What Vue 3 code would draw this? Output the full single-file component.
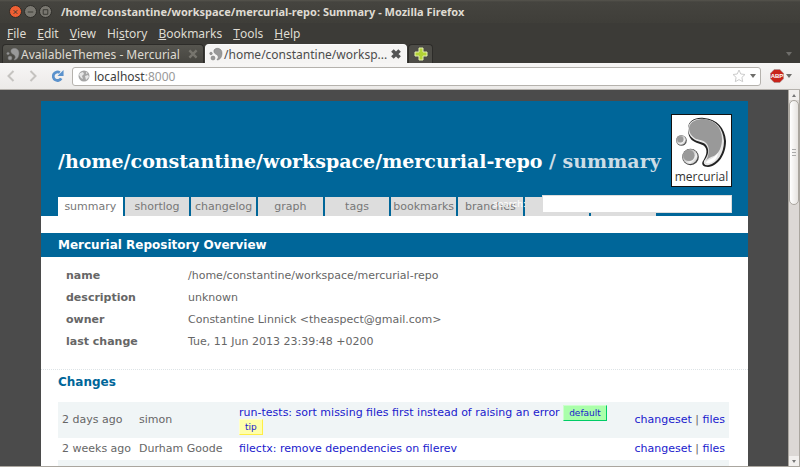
<script setup>
import { ref } from 'vue'

const menus = ['File', 'Edit', 'View', 'History', 'Bookmarks', 'Tools', 'Help']
// index of the underlined access key
const keys = { History: 2 }
const keyOf = (m) => keys[m] || 0

const tabs = ['summary', 'shortlog', 'changelog', 'graph', 'tags', 'bookmarks', 'branches', 'files', 'help']
const active = ref('summary')
const query = ref('')

const overview = [
  ['name', '/home/constantine/workspace/mercurial-repo'],
  ['description', 'unknown'],
  ['owner', 'Constantine Linnick <theaspect@gmail.com>'],
  ['last change', 'Tue, 11 Jun 2013 23:39:48 +0200'],
]

const changes = [
  { age: '2 days ago', who: 'simon', text: 'run-tests: sort missing files first instead of raising an error', tags: ['default', 'tip'] },
  { age: '2 weeks ago', who: 'Durham Goode', text: 'filectx: remove dependencies on filerev', tags: [] },
  { age: '2 days ago', who: 'simon', text: 'hgext: use same names as run for finally blocks', tags: [] },
]
</script>

<template>
  <div class="window">
    <header class="titlebar">
      <div class="winbuttons">
        <button class="win close" aria-label="Close">
          <svg viewBox="0 0 12 12"><path d="M4 4l4 4M8 4l-4 4" /></svg>
        </button>
        <button class="win" aria-label="Minimize">
          <svg viewBox="0 0 12 12"><path d="M3 6h6" /></svg>
        </button>
        <button class="win" aria-label="Maximize">
          <svg viewBox="0 0 12 12"><path d="M3.500 3.500h5v5h-5z" /></svg>
        </button>
      </div>
      <span class="wintitle">/home/constantine/workspace/mercurial-repo: Summary - Mozilla Firefox</span>
    </header>

    <nav class="menubar">
      <button v-for="m in menus" :key="m">{{ m.slice(0, keyOf(m)) }}<u>{{ m[keyOf(m)] }}</u>{{ m.slice(keyOf(m) + 1) }}</button>
    </nav>

    <div class="tabstrip">
      <div class="btab">
        <svg class="fav" viewBox="0 0 14 14"><path d="M5 3C7 0 13 1 13 6c0 4-2 7-5 7 0-1 2-2 1-4C8 7 4 7 5 3z" /><circle cx="4" cy="11" r="2" /><circle cx="2" cy="6.500" r="1.300" /></svg>
        <span class="label">AvailableThemes - Mercurial</span>
        <button class="tabclose" aria-label="Close tab"><svg viewBox="0 0 10 10"><path d="M2 2l6 6M8 2l-6 6" /></svg></button>
      </div>
      <div class="btab current">
        <svg class="fav" viewBox="0 0 14 14"><path d="M5 3C7 0 13 1 13 6c0 4-2 7-5 7 0-1 2-2 1-4C8 7 4 7 5 3z" /><circle cx="4" cy="11" r="2" /><circle cx="2" cy="6.500" r="1.300" /></svg>
        <span class="label">/home/constantine/worksp...</span>
        <button class="tabclose" aria-label="Close tab"><svg viewBox="0 0 10 10"><path d="M2 2l6 6M8 2l-6 6" /></svg></button>
      </div>
      <button class="newtab" aria-label="New tab">
        <svg viewBox="0 0 14 14"><path d="M5 1h4v4h4v4H9v4H5V9H1V5h4z" /></svg>
      </button>
      <button class="arrow alltabs" aria-label="List all tabs"></button>
    </div>

    <div class="toolbar">
      <button class="nav" aria-label="Back"><svg viewBox="0 0 12 14"><path d="M8 2L3 7l5 5" /></svg></button>
      <button class="nav" aria-label="Forward"><svg viewBox="0 0 12 14"><path d="M4 2l5 5-5 5" /></svg></button>
      <button class="nav reload" aria-label="Reload"><svg viewBox="0 0 14 14"><path class="ring" d="M11 9.500A4.600 4.600 0 1 1 9.500 3.400" /><path class="tip-arrow" d="M13.500.5v6.500H7z" /></svg></button>
      <div class="urlbar">
        <svg class="globe" viewBox="0 0 12 12"><circle cx="6" cy="6" r="5.500" /><path d="M2 3l3-1 1 2-2 2 1 3-2-1-2-3zM7 6l3-1 1 2-3 3zM8 2l2 1-2 1z" /></svg>
        <span class="url" role="textbox" aria-label="Address">localhost<i>:8000</i></span>
        <svg class="star" viewBox="0 0 14 14"><path d="M7 1l1.800 4 4.200.5-3.100 2.900.8 4.300L7 10.600l-3.700 2.100.8-4.300L1 5.500 5.200 5z" /></svg>
        <button class="arrow" aria-label="History"></button>
      </div>
      <button class="abp" aria-label="Adblock Plus">
        <svg viewBox="0 0 14 14"><path d="M4.200.5h5.600l3.700 3.700v5.600l-3.700 3.700H4.200L.5 9.800V4.200z" /><text x="7" y="9.200">ABP</text></svg>
      </button>
      <button class="arrow" aria-label="Adblock options"></button>
    </div>

    <div class="viewport">
      <main class="page">
        <div class="head">
          <h1><a href="#">/home/constantine/workspace/mercurial-repo</a> / summary</h1>
          <a class="logo" href="#" aria-label="mercurial">
            <svg viewBox="0 0 59 71">
              <defs>
                <linearGradient id="chrome" x1="0" y1="0" x2="1" y2="1">
                  <stop offset="0" stop-color="#777" />
                  <stop offset="0.700" stop-color="#f4f4f4" />
                  <stop offset="1" stop-color="#999" />
                </linearGradient>
              </defs>
              <path fill="#222" d="M16 14C16 5 24 2 32 3c13 1 21 10 22 23 0 14-8 25-18 26-5 0-7-3-5-6 3-5 5-10 2-14-2-3-6-3-10-5-5-2-7-7-7-13z" />
              <path fill="#e6e6e6" d="M16 13C17 6 24 3 32 4c12 1 19 9 20 22 0 13-7 22-15 24-4 1-6-1-5-4 4-5 6-11 2-16-2-3-7-3-11-5-5-3-7-7-7-12z" />
              <path fill="#999" d="M17 13C18 6 25 4 32 4c11 1 18 9 18 20 0 8-3 14-8 17-3 1-6 2-8 5 3-6 4-13 1-17s-7-4-11-5c-5-3-7-7-7-11z" />
              <path fill="#fff" d="M34 48c1-4 7-3 12-10-1 7-6 11-12 10z" />
              <circle cx="9.500" cy="25.500" r="5.300" fill="#555" />
              <circle cx="9" cy="25" r="4.800" fill="url(#chrome)" />
              <circle cx="8.500" cy="24.500" r="3" fill="#999" />
              <circle cx="18.500" cy="42" r="8.300" fill="#444" />
              <circle cx="18" cy="41.500" r="7.600" fill="url(#chrome)" />
              <circle cx="17" cy="40.500" r="5.600" fill="#999" />
              <text x="29.500" y="66">mercurial</text>
            </svg>
          </a>
          <form class="search" @submit.prevent>
            <label for="q">search:</label>
            <input id="q" v-model="query" type="text">
          </form>
          <ul class="menu">
            <li v-for="t in tabs" :key="t" :class="{ active: t === active }">
              <a href="#" @click.prevent="active = t">{{ t }}</a>
            </li>
          </ul>
        </div>

        <h2>Mercurial Repository Overview</h2>
        <dl>
          <template v-for="[k, v] in overview" :key="k">
            <dt>{{ k }}</dt>
            <dd>{{ v }}</dd>
          </template>
        </dl>

        <h3>Changes</h3>
        <table>
          <tbody>
            <tr v-for="(c, i) in changes" :key="i">
              <td class="age">{{ c.age }}</td>
              <td class="who">{{ c.who }}</td>
              <td class="text"><a href="#">{{ c.text }}</a> <template v-for="t in c.tags" :key="t"><span class="tag" :class="t">{{ t }}</span>{{ ' ' }}</template></td>
              <td class="links"><a href="#">changeset</a> | <a href="#">files</a></td>
            </tr>
          </tbody>
        </table>
      </main>
      <div class="scrollbar">
        <button class="up" aria-label="Scroll up"></button>
        <div class="thumb"><span></span><span></span><span></span></div>
        <button class="down" aria-label="Scroll down"></button>
      </div>
    </div>
  </div>
</template>

<style>
body {
  background: #4b4b4b;
}
</style>

<style scoped>
* {
  box-sizing: border-box;
}

.window {
  display: flex;
  flex-direction: column;
  height: 100vh;
  overflow: hidden;
  border-bottom: 1px solid #aaa69f;
  font-family: "Noto Sans", sans-serif;
  font-size: 12px;
  color: #dfdbd2;
  background: #3c3b37;
}

button {
  display: flex;
  align-items: center;
  justify-content: center;
  padding: 0;
  border: 0;
  background: none;
  font: inherit;
  color: inherit;
}

/* browser chrome */
.titlebar {
  display: flex;
  flex: none;
  align-items: center;
  gap: 9px;
  height: 23px;
  padding-left: 9px;
  background: linear-gradient(#56544d, #45443f 2px, #3f3e39);
}

.winbuttons {
  display: flex;
  gap: 2px;
}

.win {
  width: 13px;
  height: 13px;
  border: 1px solid #2e2d29;
  border-radius: 50%;
  background: #797770;
}

.win.close {
  background: #ee5f33;
}

.win svg {
  width: 12px;
  height: 12px;
  fill: none;
  stroke: #35342f;
}

.wintitle {
  font-size: 11px;
  font-weight: bold;
  white-space: nowrap;
}

.menubar {
  display: flex;
  flex: none;
  gap: 11px;
  height: 21px;
  padding-left: 7px;
}

.tabstrip {
  display: flex;
  flex: none;
  gap: 1px;
  height: 19px;
  padding: 0 8px 0 2px;
}

.btab {
  display: flex;
  align-items: center;
  gap: 1px;
  width: 202px;
  padding: 0 4px 0 3px;
  border: 1px solid #2d2c29;
  border-bottom: 0;
  border-radius: 4px 4px 0 0;
  background: linear-gradient(#56554f, #464540);
}

.btab.current {
  color: #4c4c4c;
  border-color: #fafafa;
  background: #f5f4f3;
}

.label {
  flex: 1;
  white-space: nowrap;
}

.fav {
  flex: none;
  width: 14px;
  height: 14px;
  fill: #999;
  stroke: #777;
  stroke-width: 0.5;
}

.tabclose svg {
  width: 12px;
  height: 12px;
  fill: none;
  stroke: #77756e;
  stroke-width: 2;
}

.current .tabclose svg {
  stroke: #555;
  stroke-width: 3;
}

.newtab {
  width: 25px;
  border: 1px solid #2d2c29;
  border-bottom: 0;
  border-radius: 4px 4px 0 0;
  background: #4d4c47;
}

.newtab svg {
  width: 14px;
  height: 14px;
  fill: #b2d235;
  stroke: #e4efb0;
}

.arrow {
  flex: none;
  align-self: center;
  border: 3px solid transparent;
  border-top: 4px solid #6e6d6a;
  border-bottom: 0;
}

.alltabs {
  margin-left: auto;
}

.toolbar {
  display: flex;
  flex: none;
  align-items: center;
  gap: 2px;
  height: 27px;
  padding: 0 8px 0 2px;
  background: linear-gradient(#f7f6f5, #eceae8);
  border-bottom: 1px solid #b5b2ad;
}

.nav {
  width: 19px;
}

.nav svg {
  width: 13px;
  height: 14px;
  fill: none;
  stroke: #c5c3c0;
  stroke-width: 2;
}

.nav.reload {
  width: 26px;
}

.reload .ring {
  stroke: #5b92cc;
  stroke-width: 3;
}

.reload .tip-arrow {
  fill: #5b92cc;
  stroke: none;
}

.urlbar {
  display: flex;
  flex: 1;
  align-items: center;
  gap: 4px;
  height: 19px;
  padding: 0 4px 0 5px;
  color: #3c3c3c;
  background: #fff;
  border: 1px solid #b5b2ad;
  border-radius: 3px;
}

.url {
  flex: 1;
}

.url i {
  font-style: normal;
  color: #999;
}

.globe {
  width: 12px;
  height: 12px;
  fill: #a5a5a5;
}

.globe path {
  fill: #e6e6e6;
}

.star {
  width: 14px;
  height: 14px;
  fill: #fff;
  stroke: #ccc;
}

.abp {
  margin-left: 7px;
}

.abp svg {
  width: 14px;
  height: 14px;
  fill: #c8231a;
  stroke: #999;
  stroke-width: 0.5;
}

.abp text {
  font: bold 6px "Liberation Sans", sans-serif;
  fill: #fff;
  stroke: none;
  text-anchor: middle;
}

/* page */
.viewport {
  display: flex;
  flex: 1;
  min-height: 0;
  overflow: hidden;
  background: #4b4b4b;
}

.page {
  flex: 1;
  height: max-content;
  min-height: 100%;
  margin: 11px 40px 0 41px;
  font-family: "DejaVu Sans", sans-serif;
  font-size: 11px;
  line-height: 14px;
  color: #666;
  background: #fff;
}

.page a {
  color: #1a1acd;
  text-decoration: none;
}

.head {
  position: relative;
  padding: 48px 16px 0 17px;
  background: #069;
}

h1 {
  margin: 0 0 24px;
  font-family: "DejaVu Serif", serif;
  font-size: 19px;
  line-height: 24px;
  white-space: nowrap;
  color: #ccdde6;
}

.page h1 a {
  color: #fff;
}

.logo {
  position: absolute;
  top: 13px;
  right: 16px;
  width: 61px;
  height: 73px;
  border: 1px solid #111;
  background: #fff;
}

.logo svg {
  display: block;
}

.logo text {
  font: 12px "Open Sans", sans-serif;
  fill: #333;
  text-anchor: middle;
}

.search {
  position: absolute;
  top: 94px;
  right: 16px;
  display: flex;
  align-items: center;
  gap: 16px;
  font-size: 9px;
  color: #fff;
}

.search input {
  width: 190px;
  height: 18px;
  padding: 0 4px;
  border: 1px solid #ddd;
  background: #fff;
}

.menu {
  display: grid;
  grid-template-columns: repeat(9, 1fr);
  gap: 2px;
  max-width: 598px;
  margin: 0;
  padding: 0;
  list-style: none;
}

.menu a {
  display: block;
  height: 19px;
  line-height: 19px;
  text-align: center;
  color: #777;
  background: #ddd;
}

.menu .active a {
  background: #fff;
}

h2 {
  margin: 17px 0 8px;
  padding: 0 17px;
  font-size: 12px;
  line-height: 24px;
  color: #fff;
  background: #069;
}

dl {
  display: grid;
  grid-template-columns: 122px 1fr;
  margin: 0;
  padding: 0 25px 16px;
  line-height: 22px;
  border-bottom: 1px dotted #dde3e6;
}

dt {
  font-weight: bold;
}

dd {
  margin: 0;
}

h3 {
  margin: 4px 17px 12px;
  font-size: 12px;
  line-height: 16px;
  color: #069;
}

table {
  width: calc(100% - 36px);
  margin-left: 17px;
  border-collapse: collapse;
}

tr:nth-child(odd) {
  background: #f0f5f6;
}

td {
  padding: 4px;
}

.age {
  width: 76px;
  white-space: nowrap;
}

.who {
  width: 100px;
  white-space: nowrap;
}

.text {
  padding-right: 0;
}

.links {
  width: 104px;
  text-align: right;
  white-space: nowrap;
}

.tag {
  padding: 2px 5px;
  font-size: 9px;
  color: #1a1acd;
  border: 1px solid;
}

.default {
  background: #afa;
  border-color: #cfc #0c6 #0c6 #cfc;
}

.tip {
  background: #ffa;
  border-color: #ffc #fe4 #fe4 #ffc;
}

/* scrollbar */
.scrollbar {
  display: flex;
  flex: none;
  flex-direction: column;
  align-items: center;
  width: 12px;
  background: #dcd8d5;
  border: 1px solid #aaa69f;
  border-width: 0 1px;
}

.up,
.down {
  width: 10px;
  height: 10px;
  background: #f1efed;
}

.up::before,
.down::before {
  content: "";
  border: 2px solid transparent;
  border-top-width: 0;
  border-bottom: 3px solid #777;
}

.down {
  margin-top: auto;
}

.down::before {
  border-top: 3px solid #777;
  border-bottom-width: 0;
}

.thumb {
  display: flex;
  flex-direction: column;
  align-items: center;
  justify-content: center;
  gap: 2px;
  width: 10px;
  height: 28%;
  border: 1px solid #aaa69f;
  border-radius: 5px;
  background: linear-gradient(90deg, #fff, #e6e3e0);
}

.thumb span {
  width: 4px;
  height: 1px;
  background: #aaa;
}
</style>
